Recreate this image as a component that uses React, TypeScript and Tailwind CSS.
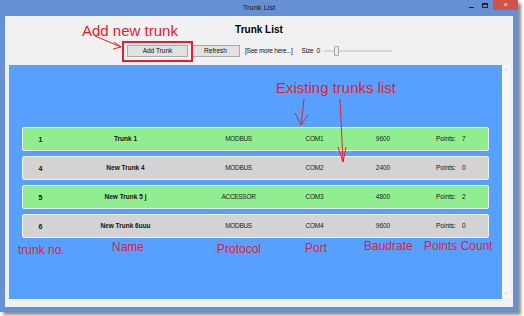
const rows = [
  { no: 1, name: "Trunk 1", protocol: "MODBUS", port: "COM1", baud: "9600", points: 7, on: true },
  { no: 4, name: "New Trunk 4", protocol: "MODBUS", port: "COM2", baud: "2400", points: 0, on: false },
  { no: 5, name: "New Trunk 5 j", protocol: "ACCESSOR", port: "COM3", baud: "4800", points: 2, on: true },
  { no: 6, name: "New Trunk 6uuu", protocol: "MODBUS", port: "COM4", baud: "9600", points: 0, on: false },
];

const labels = [
  { text: "trunk no.", cls: "left-[18px] top-[244px]" },
  { text: "Name", cls: "left-[112px] top-[241px]" },
  { text: "Protocol", cls: "left-[217px] top-[243px]" },
  { text: "Port", cls: "left-[305px] top-[242px]" },
  { text: "Baudrate", cls: "left-[364px] top-[240px]" },
  { text: "Points Count", cls: "left-[424px] top-[240px]" },
];

function TrunkRow({ row }: { row: (typeof rows)[number] }) {
  return (
    <div
      className={
        "flex h-[24px] items-center rounded-[2px] border border-[#eef3ee] text-[6.5px] leading-none text-[#111] " +
        (row.on ? "bg-[#90ee90]" : "bg-[#d3d3d3]")
      }
    >
      <div className="w-[35px] text-center text-[7px] font-bold">{row.no}</div>
      <div className="w-[135px] text-center font-bold">{row.name}</div>
      <div className="w-[91px] text-center tracking-[-0.3px] text-[#222]">{row.protocol}</div>
      <div className="w-[61px] text-center tracking-[-0.2px] text-[#222]">{row.port}</div>
      <div className="w-[76px] text-center text-[#222]">{row.baud}</div>
      <div className="ml-[15px] w-[26px]">Points:</div>
      <div>{row.points}</div>
    </div>
  );
}

export default function App() {
  return (
    <div className="relative h-[316px] w-[524px] overflow-hidden bg-white font-['Liberation_Sans',Arial,sans-serif]">
      <div className="flex h-[312px] w-[518px] flex-col bg-[#6590d4] shadow-[3px_3px_3px_rgba(0,0,0,0.45)]">
        {/* title bar */}
        <div className="relative flex h-[16px] shrink-0 items-center justify-center">
          <span className="text-[7.5px] text-[#1c1c1c]">Trunk List</span>
          <div className="absolute right-0 top-0 flex items-start">
            <div className="mr-[8px] mt-[7px] h-[1px] w-[5px] bg-[#222]" />
            <div className="mr-[5px] mt-[3px] h-[5px] w-[6px] border border-t-2 border-[#222]" />
            <div className="flex h-[10px] w-[25px] items-center justify-center bg-[#d0524c] text-[8px] leading-none text-white">
              ×
            </div>
          </div>
        </div>

        {/* client */}
        <div className="mx-[5px] mb-[5px] flex flex-1 flex-col bg-[#f1f1f1]">
          <div className="pt-[8px] text-center text-[10px] font-bold leading-[12px] text-black">Trunk List</div>

          <div className="mt-[9px] flex h-[12px] items-center pl-[122px] text-[6.5px] leading-none text-[#111]">
            <button className="h-[12px] w-[61px] border border-[#acacac] bg-[#e1e1e1]">Add Trunk</button>
            <button className="ml-[3px] h-[12px] w-[49px] border border-[#acacac] bg-[#e1e1e1]">Refresh</button>
            <span className="ml-[5px] tracking-[-0.25px]">[See more here...]</span>
            <span className="ml-[9px] tracking-[-0.2px]">Size</span>
            <span className="ml-[3px]">0</span>
            <div className="relative ml-[4px] flex h-[12px] w-[68px] items-center">
              <div className="h-[2px] w-full bg-[#d6d6d6]" />
              <div className="absolute left-[10px] top-[1px] h-[10px] w-[5px] rounded-[1px] border border-[#a8a8a8] bg-[#ececec]" />
            </div>
          </div>

          <div className="mb-[8px] ml-[4px] mr-[3px] mt-[8px] flex flex-1">
            <div className="flex-1 bg-[#58a0ff] px-[13px] pt-[62px]">
              <div className="flex flex-col gap-[5px]">
                {rows.map((r) => (
                  <TrunkRow key={r.no} row={r} />
                ))}
              </div>
            </div>
            <div className="flex w-[8px] flex-col items-center justify-between bg-[#f7f7f7] py-[2px] text-[6px] leading-none text-[#c4c4c4]">
              <span>˄</span>
              <span>˅</span>
            </div>
          </div>
        </div>
      </div>

      {/* annotations */}
      <div className="absolute left-[122px] top-[41px] h-[21px] w-[71px] border-2 border-[#e3202b]" />
      <div className="absolute left-[82px] top-[23px] text-[15px] leading-[15px] text-[#e3202b]">Add new trunk</div>
      <div className="absolute left-[276px] top-[80px] text-[15px] leading-[15px] text-[#e3202b]">Existing trunks list</div>
      {labels.map((l) => (
        <div key={l.text} className={"absolute text-[12px] leading-[12px] text-[#e3202b] " + l.cls}>
          {l.text}
        </div>
      ))}
      <svg className="pointer-events-none absolute left-0 top-0" width="524" height="316" fill="none" stroke="#e3202b" strokeWidth="1">
        <path d="M95 36 L121 47 M114 42 L121 47 L113 49" />
        <path d="M304 99 L301 125 M295 113 L301 125 L308 115" />
        <path d="M340 99 L343 162 M338 147 L343 162 L346 147" />
      </svg>
    </div>
  );
}
